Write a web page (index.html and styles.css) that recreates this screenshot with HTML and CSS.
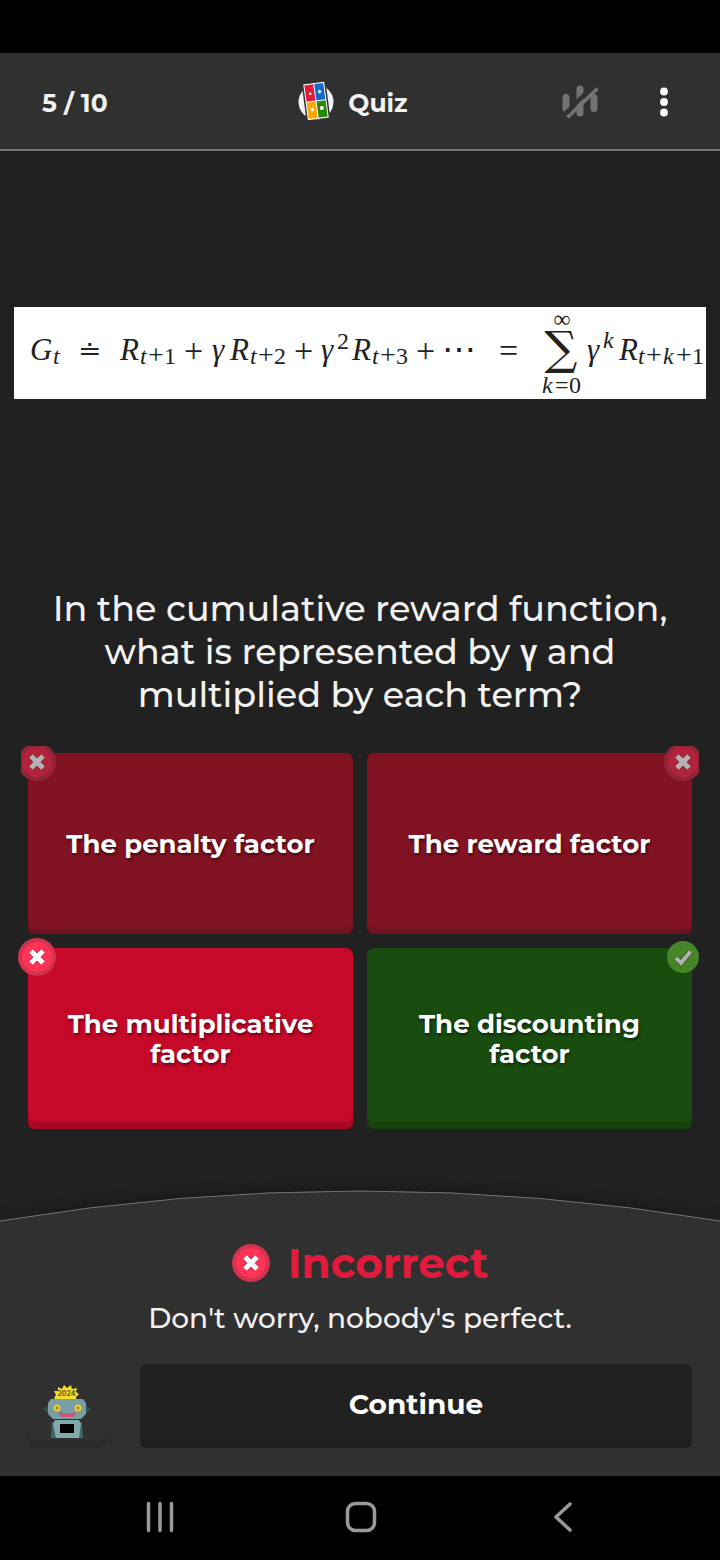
FILE: index.html
```
<!DOCTYPE html>
<html lang="en">
<head>
<meta charset="utf-8">
<meta name="viewport" content="width=device-width, initial-scale=1">
<title>Quiz</title>
<link rel="stylesheet" href="styles.css">
</head>
<body>
<svg class="defs" aria-hidden="true">
  <symbol id="wrong" viewBox="0 0 38 38">
    <circle cx="19" cy="19" r="19" fill="#d33350"/>
    <circle cx="19" cy="19" r="15" fill="#ff3355"/>
    <path d="M13 13 25 25M25 13 13 25" stroke="#b8203c" stroke-width="6.500"/>
    <path d="M13 13 25 25M25 13 13 25" stroke="#fff" stroke-width="5.200"/>
  </symbol>
  <symbol id="right" viewBox="0 0 38 38">
    <circle cx="19" cy="19" r="16" fill="#66bf39"/>
    <path d="m12 20 5 5 9.500-11.500" fill="none" stroke="#3c7d1c" stroke-width="5.500"/>
    <path d="m12 20 5 5 9.500-11.500" fill="none" stroke="#fff" stroke-width="4"/>
  </symbol>
</svg>
<div class="status"></div>
<header class="header">
  <span class="progress">5 / 10</span>
  <h1 class="title">
    <svg class="logo" viewBox="0 0 36 40" aria-hidden="true">
      <circle cx="18" cy="21" r="17.500" fill="#f2f2f2"/>
      <g transform="rotate(-7.500 18 20)">
        <rect x="6" y="2.500" width="24" height="36" fill="#333"/>
        <rect x="7.500" y="2" width="21" height="36" fill="#fff"/>
        <path fill="#e21b3c" d="M8.500 3h9v16.500h-9z"/>
        <path fill="#1368ce" d="M18.500 3h9v16.500h-9z"/>
        <path fill="#ffa602" d="M8.500 20.500h9V37h-9z"/>
        <path fill="#26890c" d="M18.500 20.500h9V37h-9z"/>
        <path fill="#fff" d="m13.200 10 1.700 3h-3.400zM22.800 9l2 2.200-2 2.200-2-2.200zM21.200 26h3.400v3.400h-3.400z"/>
        <circle cx="13.200" cy="28" r="1.800" fill="#fff"/>
      </g>
    </svg>
    <span class="name">Quiz</span>
  </h1>
  <div class="tools">
    <button class="tool" aria-label="Sound off">
      <svg width="40" height="40" viewBox="0 0 40 40" fill="none" stroke="#737373">
        <path d="M6 16.500v11M20 8v24M34 16.500v11" stroke-width="7" stroke-linecap="round"/>
        <path d="M4 34 35 3" stroke="#303030" stroke-width="4"/>
        <path d="M7.500 36.500 37.500 7.500" stroke-width="3.600"/>
      </svg>
    </button>
    <button class="tool" aria-label="More">
      <svg width="40" height="40" viewBox="0 0 40 40" fill="#fff">
        <circle cx="20" cy="10.500" r="3.900"/><circle cx="20" cy="21" r="3.900"/><circle cx="20" cy="31.500" r="3.900"/>
      </svg>
    </button>
  </div>
</header>
<main class="main">
  <div class="media">
    <svg class="formula" viewBox="0 0 692 92" role="img" aria-label="Cumulative reward formula">
      <rect width="692" height="92" fill="#fff"/>
      <g class="var">
        <text x="16" y="53">G</text><text x="106" y="53">R</text>
        <text x="198" y="53">γ</text><text x="216" y="53">R</text>
        <text x="307" y="53">γ</text><text x="338" y="53">R</text>
        <text x="573" y="53">γ</text><text x="605" y="53">R</text>
      </g>
      <g class="op">
        <text x="64" y="53" class="defined">≐</text>
        <text x="170" y="55">+</text><text x="280" y="55">+</text><text x="402" y="55">+</text>
        <text x="428" y="54">⋯</text><text x="485" y="55">=</text>
      </g>
      <g class="script">
        <text x="39" y="57" class="it">t</text>
        <text x="126" y="57"><tspan class="it">t</tspan><tspan class="plus" x="134">+</tspan><tspan x="150">1</tspan></text>
        <text x="236" y="57"><tspan class="it">t</tspan><tspan class="plus" x="244">+</tspan><tspan x="260">2</tspan></text>
        <text x="358" y="57"><tspan class="it">t</tspan><tspan class="plus" x="366">+</tspan><tspan x="382">3</tspan></text>
        <text x="323" y="42">2</text>
        <text x="589" y="41" class="it">k</text>
        <text x="624" y="57"><tspan class="it">t</tspan><tspan class="plus" x="632">+</tspan><tspan class="it" x="649">k</tspan><tspan class="plus" x="662">+</tspan><tspan x="678">1</tspan></text>
        <text x="528" y="86"><tspan class="it">k</tspan><tspan x="541">=</tspan><tspan x="555">0</tspan></text>
        <text x="548" y="20" text-anchor="middle">∞</text>
      </g>
      <text class="sum" x="547" y="57" text-anchor="middle">∑</text>
    </svg>
  </div>
  <h2 class="question">In the cumulative reward function, what is represented by γ and multiplied by each term?</h2>
  <div class="answers">
    <button class="answer missed">The penalty factor<svg class="badge left"><use href="#wrong"/></svg></button>
    <button class="answer missed">The reward factor<svg class="badge end"><use href="#wrong"/></svg></button>
    <button class="answer chosen">The multiplicative factor<svg class="badge left"><use href="#wrong"/></svg></button>
    <button class="answer correct">The discounting factor<svg class="badge end"><use href="#right"/></svg></button>
  </div>
</main>
<footer class="result">
  <svg class="arc" viewBox="0 0 720 32" preserveAspectRatio="none" aria-hidden="true">
    <path d="M0 31Q360-29 720 31V33H0z" fill="#303030"/>
    <path d="M0 31Q360-29 720 31" fill="none" stroke="#757575"/>
  </svg>
  <div class="panel">
    <h2 class="verdict"><svg class="mark" aria-hidden="true"><use href="#wrong"/></svg>Incorrect</h2>
    <p class="note">Don't worry, nobody's perfect.</p>
    <div class="actions">
      <button class="avatar" aria-label="Avatar">
        <svg width="48" height="56" viewBox="0 0 48 56">
          <path d="m15 17-4-3 2-3-2-4 4 0 0-4 4 2 2-4 3 3 4-3 1 4 5-1-1 4 3 2-3 3 1 4z" fill="#f5dc2d"/>
          <text class="year" x="23.500" y="12" text-anchor="middle">2024</text>
          <path d="m0 25 6-4v9zM48 25l-6-4v9z" fill="#315152"/>
          <path d="M8 15h32l3 4v11l-5 5H10l-5-5V19z" fill="#789fa4"/>
          <circle cx="14" cy="24" r="3.500" fill="#edc933"/><circle cx="35" cy="24" r="3.500" fill="#edc933"/>
          <circle cx="14" cy="24" r="1.300" fill="#947822"/><circle cx="35" cy="24" r="1.300" fill="#947822"/>
          <path d="M16 28q8 3 16 0 1 5-4 5h-8q-4 0-4-5z" fill="#cf5475"/>
          <path d="M9 38h30l1 16H8z" fill="#3f6669"/>
          <path d="M12 36h24l2 4-2 14H13l-3-14z" fill="#82aaac"/>
          <path d="M17 40h14v9H17z" fill="#000"/>
        </svg>
      </button>
      <button class="continue">Continue</button>
    </div>
  </div>
</footer>
<nav class="system">
  <button class="key" aria-label="Recent apps"><svg width="36" height="36" viewBox="0 0 36 36"><path d="M6.500 4.500v27M18 4.500v27M29.500 4.500v27" stroke-width="3.500"/></svg></button>
  <button class="key" aria-label="Home"><svg width="36" height="36" viewBox="0 0 36 36"><rect x="4.500" y="4.500" width="27" height="27" rx="8" stroke-width="3.500"/></svg></button>
  <button class="key" aria-label="Back"><svg width="36" height="36" viewBox="0 0 36 36"><path d="M26 5 12 18l14 13" stroke-width="3.500"/></svg></button>
</nav>
</body>
</html>
```

FILE: styles.css
```
* { box-sizing: border-box; }
body {
  margin: 0;
  min-height: 100vh;
  display: flex;
  flex-direction: column;
  background: #212121;
  color: #f2f2f2;
  font-family: Montserrat, Roboto, "Noto Sans", sans-serif;
}
h1, h2, p { margin: 0; }
button {
  font: inherit;
  color: inherit;
  border: 0;
  padding: 0;
  background: none;
}
svg { display: block; flex: none; }
.defs { display: none; }
.status { height: 53px; background: #000; }
.header {
  display: grid;
  grid-template-columns: 1fr auto 1fr;
  align-items: center;
  height: 98px;
  padding: 0 36px 0 42px;
  background: #303030;
  border-bottom: 2px solid #757575;
}
.progress, .title { font-size: 25px; line-height: 40px; font-weight: 700; }
.progress, .name { padding-top: 4px; }
.title { display: flex; align-items: center; gap: 14px; margin-right: 20px; }
.logo { width: 36px; height: 40px; }
.tools { display: flex; justify-content: flex-end; gap: 44px; }
.main { flex: 1; display: flex; flex-direction: column; }
.media {
  flex: 1;
  display: flex;
  align-items: center;
  padding: 0 14px;
}
.formula { width: 100%; font-family: "Liberation Serif", serif; fill: #222; }
.var { font-size: 31px; font-style: italic; }
.op { font-size: 34px; }
.defined { font-size: 28px; }
.script { font-size: 24px; }
.plus { font-size: 28px; }
.it { font-style: italic; }
.sum { font-size: 46px; font-family: "DejaVu Serif", serif; }
.question {
  padding: 33px 28px 37px;
  font-size: 35px;
  line-height: 43px;
  font-weight: 500;
  text-align: center;
}
.answers {
  display: grid;
  grid-template-columns: 1fr 1fr;
  gap: 14px;
  padding: 0 28px 61px;
}
.answer {
  position: relative;
  min-height: 181px;
  padding: 6px 24px;
  border-radius: 7px;
  font-size: 26px;
  line-height: 30px;
  font-weight: 700;
  text-align: center;
  color: #fff;
  text-shadow: 1px 2px 3px rgba(0, 0, 0, .5);
}
.missed { background: #821323; box-shadow: inset 0 -7px #701220; clip-path: inset(-7px); }
.chosen { background: #c60929; box-shadow: inset 0 -7px #a90823; }
.correct { background: #194d10; box-shadow: inset 0 -7px #16420e; }
.badge { position: absolute; top: -10px; width: 38px; height: 38px; }
.left { left: -10px; }
.end { right: -10px; }
.missed .badge, .correct .badge { filter: brightness(.7); }
.arc { width: 100%; height: 32px; filter: drop-shadow(0 -3px 6px rgba(0, 0, 0, .3)); }
.panel { position: relative; background: #303030; padding: 14px 28px 28px; text-align: center; }
.verdict {
  display: flex;
  align-items: center;
  justify-content: center;
  gap: 18px;
  font-size: 42px;
  line-height: 54px;
  font-weight: 700;
  color: #e21b3c;
}
.mark { width: 38px; height: 38px; }
.note { margin: 8px 0 26px; font-size: 28px; line-height: 40px; font-weight: 500; }
.actions { display: flex; gap: 34px; }
.avatar {
  display: flex;
  align-items: flex-end;
  justify-content: center;
  width: 78px;
  height: 84px;
  padding-bottom: 8px;
  border-radius: 7px;
  box-shadow: inset 0 -7px #2a2a2a;
}
.year { font: 700 7px Inter, sans-serif; fill: #6b5a10; }
.continue {
  flex: 1;
  height: 84px;
  padding-bottom: 4px;
  border-radius: 7px;
  background: #212121;
  box-shadow: inset 0 -7px #1e1e1e;
  font-size: 28px;
  line-height: 40px;
  font-weight: 700;
  color: #fff;
}
.system {
  display: flex;
  justify-content: center;
  gap: 165px;
  height: 84px;
  padding: 0 0 2px 2px;
  background: #000;
}
.key svg { fill: none; stroke: #999; stroke-linecap: round; stroke-linejoin: round; }
```
